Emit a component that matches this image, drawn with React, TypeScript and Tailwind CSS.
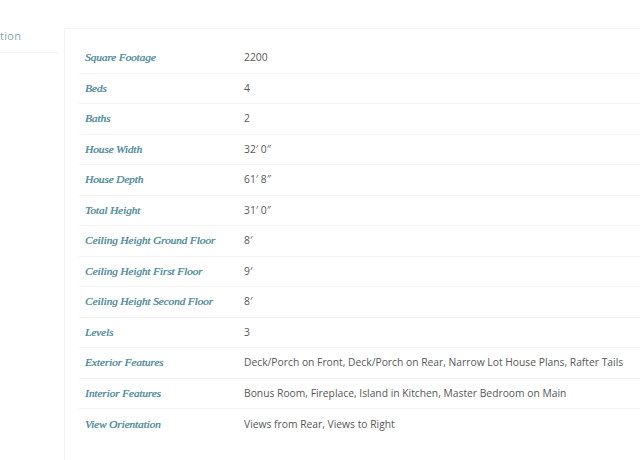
const specs: [string, string][] = [
  ["Square Footage", "2200"],
  ["Beds", "4"],
  ["Baths", "2"],
  ["House Width", "32′ 0″"],
  ["House Depth", "61′ 8″"],
  ["Total Height", "31′ 0″"],
  ["Ceiling Height Ground Floor", "8′"],
  ["Ceiling Height First Floor", "9′"],
  ["Ceiling Height Second Floor", "8′"],
  ["Levels", "3"],
  ["Exterior Features", "Deck/Porch on Front, Deck/Porch on Rear, Narrow Lot House Plans, Rafter Tails"],
  ["Interior Features", "Bonus Room, Fireplace, Island in Kitchen, Master Bedroom on Main"],
  ["View Orientation", "Views from Rear, Views to Right"],
];

export default function App() {
  return (
    <div className="h-[460px] w-[640px] overflow-hidden bg-white pt-[28px]">
      <div className="flex h-full">
        <div className="w-[64px] shrink-0">
          <div className="h-[25px] border-b border-[#f1f1f1] mr-[6px]">
            <p className="pt-[1px] text-[11px] leading-[14px] text-[#7ea6a9] font-['Open_Sans',sans-serif] tracking-wide">
              tion
            </p>
          </div>
        </div>
        <div className="flex-1 border-l border-t border-[#f3f3f3] pl-[14px] pt-[14px]">
          {specs.map(([label, value], i) => (
            <div
              key={label}
              className={
                "flex h-[30.5px] items-center " +
                (i < specs.length - 1 ? "border-b border-[#f2f2f2]" : "")
              }
            >
              <div className="w-[165px] shrink-0 pl-[6px] font-['Liberation_Serif',serif] text-[11.4px] italic tracking-[-0.15px] text-[#5890a2] [text-shadow:0.3px_0_0_#5890a2]">
                {label}
              </div>
              <div className="whitespace-nowrap font-['Open_Sans',sans-serif] text-[10.3px] text-[#585858]">
                {value}
              </div>
            </div>
          ))}
        </div>
      </div>
    </div>
  );
}
